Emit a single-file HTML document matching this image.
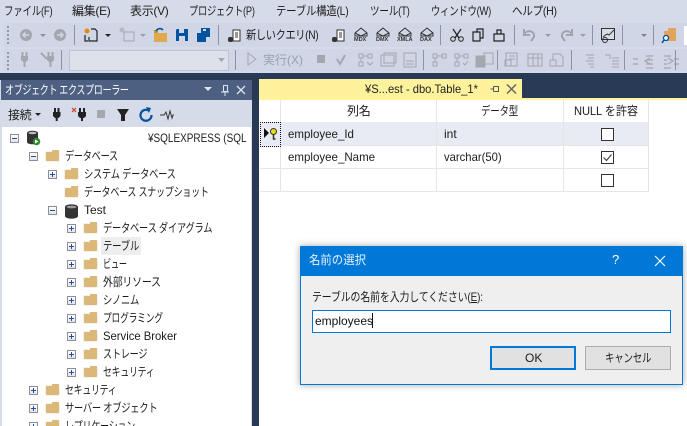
<!DOCTYPE html>
<html lang="ja"><head><meta charset="utf-8"><style>
html,body{margin:0;padding:0;width:687px;height:426px;overflow:hidden}
#w{width:687px;height:426px;overflow:hidden;position:relative;background:#d6dbe9;font-family:"Liberation Sans","Noto Sans CJK JP",sans-serif;font-size:12px;color:#1c1c1c}
.a,.t{position:absolute;white-space:nowrap}
.t{line-height:16px;height:16px;transform-origin:0 0}
.sep{position:absolute;width:1px;height:20px;background:#8c93a6}
.grip{position:absolute;width:3px;height:18px;background:radial-gradient(circle at 1px 1px,#7d8498 1px,transparent 1px) 0 0/3px 4px}
.bar{position:absolute;background:#ccd2e2}
.f{position:absolute;width:13px;height:9px;background:#dcb878;border-radius:1px;box-shadow:0 0 0 1px #f2f0ea}
.f:before{content:"";position:absolute;left:6px;top:-2px;width:7px;height:2px;background:#dcb878}
.b{position:absolute;width:7px;height:7px;border:1px solid #8a8f98;background:linear-gradient(#fff,#e2e4ea)}
.b:before{content:"";position:absolute;left:1px;top:3px;width:5px;height:1px;background:#2a4a9a}
.p:after{content:"";position:absolute;left:3px;top:1px;width:1px;height:5px;background:#2a4a9a}
.cb{position:absolute;left:601px;width:11px;height:11px;border:1px solid #333;background:#fff}
svg{position:absolute;overflow:visible}
.tr{font-size:12px;letter-spacing:-.3px}
.g{color:#9aa0ae}
</style></head><body><div id="w">

<!-- menu -->
<div class="t" style="left:4px;top:3px;letter-spacing:-.3px;transform:scaleX(.79)">ファイル(F)</div>
<div class="t" style="left:72px;top:3px;letter-spacing:-.3px">編集(E)</div>
<div class="t" style="left:130px;top:3px;letter-spacing:-.3px">表示(V)</div>
<div class="t" style="left:189px;top:3px;letter-spacing:-.3px;transform:scaleX(.77)">プロジェクト(P)</div>
<div class="t" style="left:276px;top:3px;letter-spacing:-.3px;transform:scaleX(.87)">テーブル構造(L)</div>
<div class="t" style="left:370px;top:3px;letter-spacing:-.3px;transform:scaleX(.8)">ツール(T)</div>
<div class="t" style="left:431px;top:3px;letter-spacing:-.3px;transform:scaleX(.78)">ウィンドウ(W)</div>
<div class="t" style="left:512px;top:3px;letter-spacing:-.3px;transform:scaleX(.88)">ヘルプ(H)</div>

<!-- toolbars -->
<div class="bar" style="left:4px;top:23px;width:683px;height:24px;background:#d0d6e5"></div>
<div class="bar" style="left:4px;top:49px;width:683px;height:22px;background:#d0d6e5"></div>
<div class="grip" style="left:7px;top:26px"></div>
<div class="grip" style="left:7px;top:52px"></div>

<!-- toolbar 1 -->
<svg style="left:0;top:0" width="687" height="72" viewBox="0 0 687 72">
<circle cx="26" cy="35" r="6" fill="#a3a7b0"/><path d="M29 35h-6m2.500-2.500L23 35l2.500 2.500" stroke="#d0d6e5" stroke-width="1.500" fill="none"/>
<path d="M40 34h6l-3 3z" fill="#8d919c"/>
<circle cx="60" cy="35" r="6" fill="#a3a7b0"/><path d="M57 35h6m-2.500-2.500L63 35l-2.500 2.500" stroke="#d0d6e5" stroke-width="1.500" fill="none"/>
<path d="M91 29h4l2 2v10h-8v-4M85 35v6h3" stroke="#222" stroke-width="1.200" fill="none"/><circle cx="87" cy="31" r="2.500" fill="#e08a1a"/>
<path d="M105 34h6l-3 3z" fill="#222"/>
<rect x="124" y="32" width="10" height="9" fill="none" stroke="#a3a7b0"/><circle cx="122" cy="30" r="2.500" fill="#b5b9c3"/>
<path d="M140 34h6l-3 3z" fill="#9a9ea8"/>
<path d="M154 33h13v9h-13z" fill="#e0a94f"/><path d="M154 33v-3h4v3" fill="#c9933a"/><path d="M156 31c2-3 5-3 7-1" stroke="#00539c" stroke-width="1.600" fill="none"/>
<path d="M177 29h11v12h-12v-11z" fill="#00539c"/><rect x="179" y="29" width="5" height="4" fill="#d0d6e5"/><rect x="179" y="36" width="6" height="5" fill="#d0d6e5"/>
<path d="M197 33h9v9h-9z M201 28h9v9h-4v-4h-5z" fill="#00539c"/><rect x="203" y="29" width="3" height="2" fill="#d0d6e5"/>
<rect x="228" y="37" width="5" height="5" rx="2" fill="#333"/><path d="M233 30h7v11h-7z" fill="#fff" stroke="#333"/><path d="M235 33h3m-3 2h3m-3 2h3" stroke="#333"/>
<rect x="332" y="37" width="5" height="5" rx="2" fill="#333"/><path d="M337 30h7v11h-7z" fill="#fff" stroke="#333"/><path d="M339 33h3m-3 2h3m-3 2h3" stroke="#333"/>
<g fill="none" stroke="#333"><path d="M355 33l6-5 6 5v3h-12zM355 33l6 3 6-3"/><path d="M377 33l6-5 6 5v3h-12zM377 33l6 3 6-3"/><path d="M399 33l6-5 6 5v3h-12zM399 33l6 3 6-3"/><path d="M421 33l6-5 6 5v3h-12zM421 33l6 3 6-3"/></g>
<path d="M453 29l6 9M461 29l-6 9" stroke="#222" stroke-width="1.300"/><circle cx="453" cy="39" r="2.300" fill="none" stroke="#222"/><circle cx="461" cy="39" r="2.300" fill="none" stroke="#222"/>
<path d="M473 32h7v9h-7zM477 32v-3h6v9h-3" fill="none" stroke="#222" stroke-width="1.200"/>
<path d="M494 34h10v7h-10zM497 34v-4h4v4" fill="none" stroke="#222" stroke-width="1.200"/>
<path d="M524 29v6h6M524 34c4-5 11-3 10 3l-3 4" fill="none" stroke="#a0a4ae" stroke-width="2"/>
<path d="M545 34h6l-3 3z" fill="#9a9ea8"/>
<path d="M570 29v6h-6M570 34c-4-5-11-3-10 3l3 4" fill="none" stroke="#a0a4ae" stroke-width="2" transform="translate(2 0)"/>
<path d="M580 34h6l-3 3z" fill="#9a9ea8"/>
<rect x="601.500" y="28.500" width="13" height="11" fill="#d8dce8" stroke="#333"/><path d="M603 37l4-3 2 1 5-5" stroke="#333" fill="none"/><circle cx="605" cy="40" r="2.500" fill="none" stroke="#333"/>
<path d="M641 34h6l-3 3z" fill="#7c808a"/>
<path d="M664 31h12v10h-12z" fill="#e0a55a"/><path d="M668 28h8v3h-8z" fill="#e0a55a"/><circle cx="666" cy="38" r="2.500" fill="#fff" stroke="#00539c" stroke-width="1.300"/><path d="M664 40l-2 3" stroke="#00539c" stroke-width="1.500"/>
</svg>
<div class="sep" style="left:74px;top:25px"></div>
<div class="sep" style="left:218px;top:25px"></div>
<div class="sep" style="left:440px;top:25px"></div>
<div class="sep" style="left:514px;top:25px"></div>
<div class="sep" style="left:592px;top:25px"></div>
<div class="sep" style="left:622px;top:25px"></div>
<div class="sep" style="left:653px;top:25px"></div>
<div class="t" style="left:246px;top:27px;letter-spacing:-.4px;transform:scaleX(.85)">新しいクエリ(N)</div>
<div class="a" style="left:354px;top:37px;font-size:5.500px;font-weight:bold;color:#333;line-height:6px">MDX</div>
<div class="a" style="left:376px;top:37px;font-size:5.500px;font-weight:bold;color:#333;line-height:6px">DMX</div>
<div class="a" style="left:397px;top:37px;font-size:5.500px;font-weight:bold;color:#333;line-height:6px">XMLA</div>
<div class="a" style="left:420px;top:37px;font-size:5.500px;font-weight:bold;color:#333;line-height:6px">DAX</div>
<div class="a" style="left:684px;top:26px;width:3px;height:19px;background:#fff"></div>

<!-- toolbar 2 -->
<svg style="left:0;top:0" width="687" height="72" viewBox="0 0 687 72" stroke="#a3a7b0" fill="none">
<path d="M22.500 52v4M26.500 52v4" stroke-width="2"/><path d="M21 56h7v4l-2 2h-3l-2-2z" fill="#a3a7b0" stroke="none"/><path d="M24.500 62v5" stroke-width="2"/>
<path d="M41 53l6 6" stroke-width="2"/><path d="M48.500 52v4M52.500 52v4" stroke-width="2"/><path d="M47 56h7v4l-2 2h-3l-2-2z" fill="#a3a7b0" stroke="none"/><path d="M50.500 62v5" stroke-width="2"/>
<path d="M248 53l8 6-8 6z" />
<rect x="317" y="55" width="8" height="8" fill="#a3a7b0" stroke="none"/>
<path d="M337 59l3 5 5-9" stroke-width="2"/>
<rect x="359" y="54" width="4" height="4"/><rect x="368" y="54" width="4" height="4"/><rect x="359" y="62" width="4" height="4"/><path d="M363 56h5M361 58v4M367 62l3 3 3-3"/>
<rect x="381" y="55" width="13" height="11"/><rect x="384" y="53" width="12" height="10"/>
<rect x="404" y="53" width="12" height="14"/><path d="M406 61h8M406 64h8"/>
<rect x="433" y="54" width="4" height="4"/><rect x="442" y="54" width="4" height="4"/><rect x="433" y="62" width="4" height="4"/><path d="M437 56h5M435 58v4"/>
<rect x="455" y="54" width="4" height="4"/><rect x="464" y="54" width="4" height="4"/><rect x="455" y="62" width="4" height="4"/><path d="M459 56h5M457 58v4M463 63l2 2 3-4"/>
<rect x="476" y="56" width="9" height="11" fill="#a3a7b0"/><rect x="484" y="53" width="9" height="11"/>
<rect x="506" y="53" width="11" height="13"/><rect x="505" y="60" width="6" height="6"/><path d="M509 56h6M509 59h6"/>
<rect x="528" y="54" width="14" height="12"/><path d="M528 58h14M533 54v12M538 54v12"/>
<rect x="550" y="60" width="6" height="6"/><path d="M553 60v-6h7l3 3v9h-7"/>
<path d="M586 55h8M588 58h6M586 61h8M588 64h6M590 67h4"/>
<path d="M605 55h5v4M612 58h7M612 61h7M612 64h7M612 67h7"/>
<path d="M633 59h5M633 64h5M646 56h7M646 60h7M646 64h7M646 68h7M650 58l-5 3 5 3" stroke-width="1.300"/>
<path d="M664 56h7M664 60h3M664 64h3M664 68h7M674 59h5M674 64h5M668 58l5 3-5 3" stroke-width="1.300"/>
</svg>
<div class="sep" style="left:61px;top:50px"></div>
<div class="sep" style="left:235px;top:50px"></div>
<div class="sep" style="left:423px;top:50px"></div>
<div class="sep" style="left:497px;top:50px"></div>
<div class="sep" style="left:571px;top:50px"></div>
<div class="sep" style="left:624px;top:50px"></div>
<div class="sep" style="left:675px;top:50px"></div>
<div class="a" style="left:69px;top:50px;width:158px;height:19px;background:#dde1ec;border:1px solid #bcc3d4"></div>
<svg style="left:218px;top:58px" width="8" height="5"><path d="M0 0h7l-3.500 4z" fill="#a3a7b0"/></svg>
<div class="t g" style="left:263px;top:52px">実行(X)</div>

<!-- dark band -->
<div class="a" style="left:0;top:73px;width:687px;height:353px;background:#293a56"></div>

<!-- object explorer -->
<div class="a" style="left:0;top:80px;width:252px;height:346px;background:#d6dbe9"></div>
<div class="a" style="left:1px;top:80px;width:251px;height:20px;background:#4d6082"></div>
<div class="t" style="left:5px;top:82px;color:#fff;letter-spacing:-.5px;transform:scaleX(.756)">オブジェクト エクスプローラー</div>
<svg style="left:200px;top:84px" width="50" height="14" fill="none" stroke="#dfe3ec">
<path d="M4 3h8l-4 4z" fill="#dfe3ec" stroke="none"/>
<path d="M23.500 1.500h4v6h-4zM21 8h8M25 8v4"/>
<path d="M37 2l8 8M45 2l-8 8" stroke-width="1.300"/>
</svg>
<div class="t" style="left:8px;top:107px;letter-spacing:-.2px">接続</div>
<svg style="left:0;top:100px" width="252" height="27">
<path d="M35 13h6l-3 3z" fill="#222"/>
<path d="M55 8v4M58.500 8v4" stroke="#222" stroke-width="2"/><path d="M53 12h7.500v4l-2 2h-3.500l-2-2z" fill="#222"/><path d="M56.700 18v3" stroke="#222" stroke-width="2"/>
<path d="M80 8v4M84 8v4" stroke="#222" stroke-width="2"/><path d="M78 12h8v4l-2 2h-4l-2-2z" fill="#222"/><path d="M82 18v3" stroke="#222" stroke-width="2"/>
<path d="M72 8l4 4M76 8l-4 4" stroke="#c8401c" stroke-width="1.200"/>
<rect x="97" y="10" width="8" height="8" fill="#a3a7b0"/>
<path d="M117 9h12l-4 6v6h-4v-6z" fill="#222"/>
<path d="M149.500 11a5.500 5.500 0 1 0 2 4" stroke="#00539c" stroke-width="2.200" fill="none"/><path d="M146 7l5 1-2 5z" fill="#00539c"/>
<path d="M160 15h4l2-3 2 7 2-8 2 7 1-3h1" stroke="#333" fill="none"/>
</svg>

<!-- tree -->
<div class="a" style="left:2px;top:127px;width:249px;height:299px;background:#fff"></div>
<div class="a" style="left:101px;top:237px;width:40px;height:18px;background:#eeeeee"></div>

<div class="b" style="left:10px;top:134px"></div>
<svg style="left:26px;top:130px" width="16" height="16"><path d="M1 3c0-3 11-3 11 0v9c0 3-11 3-11 0z" fill="#333"/><ellipse cx="6.500" cy="3" rx="4" ry="1.300" fill="#bbb"/><circle cx="10.500" cy="11.500" r="3.800" fill="#2f8a32"/><path d="M9 9.500l3.500 2-3.500 2z" fill="#fff"/></svg>
<div class="t" style="left:148px;top:130px;transform:scaleX(.83)">¥SQLEXPRESS (SQL</div>

<div class="b" style="left:29px;top:152px"></div><div class="f" style="left:46px;top:152px"></div>
<div class="t tr" style="left:65px;top:148px;transform:scaleX(.76)">データベース</div>

<div class="b p" style="left:48px;top:170px"></div><div class="f" style="left:65px;top:170px"></div>
<div class="t tr" style="left:84px;top:166px;transform:scaleX(.77)">システム データベース</div>

<div class="f" style="left:65px;top:188px"></div>
<div class="t tr" style="left:84px;top:184px;transform:scaleX(.75)">データベース スナップショット</div>

<div class="b" style="left:48px;top:206px"></div>
<svg style="left:65px;top:204px" width="14" height="15"><path d="M0 3c0-3.500 13-3.500 13 0v9c0 3.500-13 3.500-13 0z" fill="#333"/><ellipse cx="6.500" cy="3" rx="5" ry="1.400" fill="#9a9a9a"/></svg>
<div class="t" style="left:84px;top:202px">Test</div>

<div class="b p" style="left:67px;top:224px"></div><div class="f" style="left:84px;top:224px"></div>
<div class="t tr" style="left:103px;top:220px;transform:scaleX(.77)">データベース ダイアグラム</div>

<div class="b p" style="left:67px;top:242px"></div><div class="f" style="left:84px;top:242px"></div>
<div class="t tr" style="left:103px;top:238px;transform:scaleX(.78)">テーブル</div>

<div class="b p" style="left:67px;top:260px"></div><div class="f" style="left:84px;top:260px"></div>
<div class="t tr" style="left:103px;top:256px;transform:scaleX(.68)">ビュー</div>

<div class="b p" style="left:67px;top:278px"></div><div class="f" style="left:84px;top:278px"></div>
<div class="t tr" style="left:103px;top:274px;transform:scaleX(.83)">外部リソース</div>

<div class="b p" style="left:67px;top:296px"></div><div class="f" style="left:84px;top:296px"></div>
<div class="t tr" style="left:103px;top:292px;transform:scaleX(.77)">シノニム</div>

<div class="b p" style="left:67px;top:314px"></div><div class="f" style="left:84px;top:314px"></div>
<div class="t tr" style="left:103px;top:310px;transform:scaleX(.73)">プログラミング</div>

<div class="b p" style="left:67px;top:332px"></div><div class="f" style="left:84px;top:332px"></div>
<div class="t" style="left:103px;top:328px;transform:scaleX(.94)">Service Broker</div>

<div class="b p" style="left:67px;top:350px"></div><div class="f" style="left:84px;top:350px"></div>
<div class="t tr" style="left:103px;top:346px;transform:scaleX(.76)">ストレージ</div>

<div class="b p" style="left:67px;top:368px"></div><div class="f" style="left:84px;top:368px"></div>
<div class="t tr" style="left:103px;top:364px;transform:scaleX(.74)">セキュリティ</div>

<div class="b p" style="left:29px;top:386px"></div><div class="f" style="left:46px;top:386px"></div>
<div class="t tr" style="left:65px;top:382px;transform:scaleX(.74)">セキュリティ</div>

<div class="b p" style="left:29px;top:404px"></div><div class="f" style="left:46px;top:404px"></div>
<div class="t tr" style="left:65px;top:400px;transform:scaleX(.77)">サーバー オブジェクト</div>

<div class="b p" style="left:29px;top:422px"></div><div class="f" style="left:46px;top:422px"></div>
<div class="t tr" style="left:65px;top:418px;transform:scaleX(.75)">レプリケーション</div>

<!-- designer -->
<div class="a" style="left:259px;top:100px;width:428px;height:326px;background:#fff"></div>
<div class="a" style="left:259px;top:79px;width:263px;height:19px;background:#fff29d"></div>
<div class="a" style="left:259px;top:98px;width:428px;height:2px;background:#fff29d"></div>
<div class="t" style="left:365px;top:81px;color:#222;transform:scaleX(.93)">¥S...est - dbo.Table_1*</div>
<svg style="left:490px;top:83px" width="32" height="12" fill="none" stroke="#555">
<path d="M0.500 6h3M3.500 3.500v5M3.500 3.500h5v5h-5"/>
<path d="M17 1.500l9 9M26 1.500l-9 9" stroke-width="1.500" stroke="#666"/>
</svg>

<!-- grid -->
<div class="a" style="left:260px;top:122px;width:389px;height:24px;background:#e8ebf3"></div>
<div class="a" style="left:260px;top:145px;width:389px;height:1px;background:#e6e6e6"></div>
<div class="a" style="left:260px;top:168px;width:389px;height:1px;background:#e6e6e6"></div>
<div class="a" style="left:260px;top:191px;width:389px;height:1px;background:#e6e6e6"></div>
<div class="a" style="left:260px;top:122px;width:389px;height:1px;background:#ebebeb"></div>
<div class="a" style="left:280px;top:100px;width:1px;height:92px;background:#e6e6e6"></div>
<div class="a" style="left:436px;top:100px;width:1px;height:92px;background:#e6e6e6"></div>
<div class="a" style="left:563px;top:100px;width:1px;height:92px;background:#e6e6e6"></div>
<div class="a" style="left:648px;top:100px;width:1px;height:92px;background:#e6e6e6"></div>
<div class="t" style="left:347px;top:103px;letter-spacing:-.2px">列名</div>
<div class="t" style="left:481px;top:103px;letter-spacing:-.3px;transform:scaleX(.79)">データ型</div>
<div class="t" style="left:574px;top:103px;letter-spacing:-.1px;transform:scaleX(.93)">NULL を許容</div>
<div class="a" style="left:260px;top:122px;width:19px;height:23px;border:1px dotted #111;background:#e8ebf3"></div>
<svg style="left:264px;top:128px" width="16" height="12"><path d="M0 0l5 5-5 5z" fill="#111"/><circle cx="9.500" cy="3.500" r="3" fill="#f0dc10" stroke="#333"/><path d="M9.500 6v5h2" stroke="#333" stroke-width="1.500" fill="none"/></svg>
<div class="t" style="left:288px;top:126px;transform:scaleX(.96)">employee_Id</div>
<div class="t" style="left:444px;top:126px">int</div>
<div class="t" style="left:288px;top:149px;transform:scaleX(.96)">employee_Name</div>
<div class="t" style="left:444px;top:149px;transform:scaleX(.94)">varchar(50)</div>
<div class="cb" style="top:128px"></div>
<div class="cb" style="top:151px"></div>
<svg style="left:602px;top:152px" width="11" height="11"><path d="M1.500 5.500l3 3 5-6" stroke="#444" stroke-width="1.200" fill="none"/></svg>
<div class="cb" style="top:174px"></div>

<!-- dialog -->
<div class="a" style="left:300px;top:246px;width:381px;height:137px;background:#efefef;border:1px solid #0078d7;box-shadow:0 0 7px rgba(0,0,0,.35)"></div>
<div class="a" style="left:300px;top:246px;width:383px;height:30px;background:#0078d7"></div>
<div class="t" style="left:309px;top:252px;color:#fff;font-size:12px;opacity:.9;transform:scaleX(.95)">名前の選択</div>
<div class="t" style="left:612px;top:252px;color:#fff;font-size:13px">?</div>
<svg style="left:654px;top:255px" width="12" height="12"><path d="M1 1l10 10M11 1L1 11" stroke="#fff" stroke-width="1.100"/></svg>
<div class="t" style="left:312px;top:289px;letter-spacing:-.15px;transform:scaleX(.826)">テーブルの名前を入力してください(<u>E</u>):</div>
<div class="a" style="left:312px;top:310px;width:357px;height:21px;background:#fff;border:1px solid #0078d7"></div>
<div class="t" style="left:315px;top:313px;color:#111">employees</div>
<div class="a" style="left:372px;top:313px;width:1px;height:15px;background:#111"></div>
<div class="a" style="left:490px;top:346px;width:82px;height:20px;background:#e1e1e1;border:2px solid #0078d7"></div>
<div class="t" style="left:525px;top:350px">OK</div>
<div class="a" style="left:585px;top:346px;width:84px;height:22px;background:#e1e1e1;border:1px solid #adadad"></div>
<div class="t" style="left:605px;top:350px;letter-spacing:-.3px;transform:scaleX(.79)">キャンセル</div>
</div></body></html>
